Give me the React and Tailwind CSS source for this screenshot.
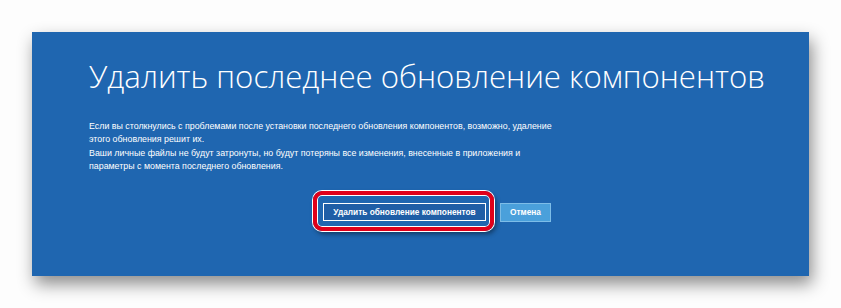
export default function App() {
  return (
    <div className="w-[841px] h-[308px] bg-[#fdfdfd] pt-[32px] pl-[32px] overflow-hidden">
      <div className="w-[777px] h-[244px] bg-[#1f66b0] shadow-[3px_8px_16px_rgba(0,0,0,0.45)] pl-[57px] pt-[22px] text-white">
        <h1 className="font-['Open_Sans',sans-serif] font-light text-[31.2px] leading-[44px]">
          Удалить последнее обновление компонентов
        </h1>

        <div className="mt-[22px] font-['Liberation_Sans',Arial,sans-serif] text-[8.85px] leading-[12.5px] whitespace-nowrap">
          <p>
            Если вы столкнулись с проблемами после установки последнего обновления компонентов, возможно, удаление
            <br />
            этого обновления решит их.
          </p>
          <p className="mt-[2px]">
            Ваши личные файлы не будут затронуты, но будут потеряны все изменения, внесенные в приложения и
            <br />
            параметры с момента последнего обновления.
          </p>
        </div>

        <div className="w-[462px] mt-[31px] flex justify-end gap-[14px] font-['Liberation_Sans',Arial,sans-serif] text-[8.3px] font-bold whitespace-nowrap">
          <div className="relative">
            <span className="absolute -left-[10px] -right-[8px] -top-[12px] -bottom-[9px] rounded-[9px] border-[4px] border-[#e0001a] shadow-[0_0_0_1px_#fff,inset_0_0_0_1px_#fff,2px_3px_5px_rgba(0,0,0,0.45)]" />
            <button className="relative w-[163px] h-[18px] border border-white bg-[#1f5ea6] text-white leading-[16px]">
              Удалить обновление компонентов
            </button>
          </div>
          <button className="w-[51px] h-[19px] border border-[#7dbde8] bg-[#4aa0db] text-white leading-[17px]">
            Отмена
          </button>
        </div>
      </div>
    </div>
  );
}
